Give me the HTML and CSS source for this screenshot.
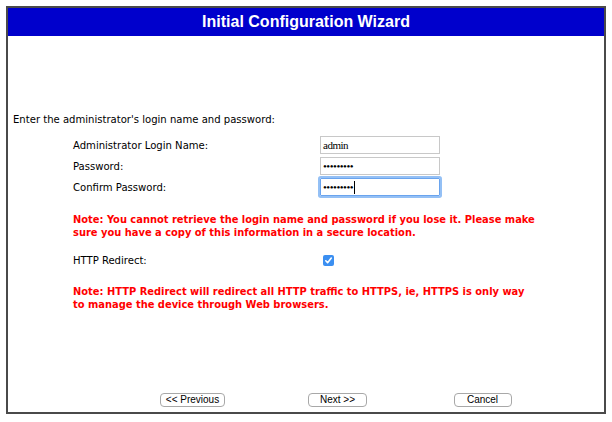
FILE: index.html
```html
<!DOCTYPE html>
<html>
<head>
<meta charset="utf-8">
<link rel="stylesheet" href="styles.css">
</head>
<body>
<div class="frame">
  <div class="header">Initial Configuration Wizard</div>
  <div class="content">
    <p class="intro">Enter the administrator's login name and password:</p>
    <div class="fields">
      <span class="label">Administrator Login Name:</span>
      <span class="field">admin</span>
      <span class="label">Password:</span>
      <span class="field">&#8226;&#8226;&#8226;&#8226;&#8226;&#8226;&#8226;&#8226;&#8226;</span>
      <span class="label">Confirm Password:</span>
      <span class="field focused">&#8226;&#8226;&#8226;&#8226;&#8226;&#8226;&#8226;&#8226;&#8226;<span class="caret"></span></span>
    </div>
    <p class="note note-login">Note: You cannot retrieve the login name and password if you lose it. Please make sure you have a copy of this information in a secure location.</p>
    <div class="fields redirect">
      <span class="label">HTTP Redirect:</span>
      <span class="checkbox"><svg viewBox="0 0 11 11" width="11" height="11"><path d="M2.8 5.8 L4.6 7.7 L8.3 3.1" fill="none" stroke="#fff" stroke-width="1.6" stroke-linecap="round" stroke-linejoin="round"/></svg></span>
    </div>
    <p class="note note-redirect">Note: HTTP Redirect will redirect all HTTP traffic to HTTPS, ie, HTTPS is only way to manage the device through Web browsers.</p>
    <div class="buttons">
      <span class="btn">&lt;&lt; Previous</span>
      <span class="btn">Next &gt;&gt;</span>
      <span class="btn">Cancel</span>
    </div>
  </div>
</div>
</body>
</html>
```
FILE: styles.css
```css
html, body {
  margin: 0;
  padding: 0;
  background: #fff;
}
body {
  font-family: "DejaVu Sans Condensed", "DejaVu Sans", sans-serif;
  font-size: 11px;
  color: #000;
}
.frame {
  margin: 6px 0 0 6px;
  width: 596px;
  height: 404px;
  border: 2px solid #4a4a4a;
  display: flex;
  flex-direction: column;
}
.header {
  height: 28px;
  line-height: 28px;
  background: #0000cc;
  color: #fff;
  text-align: center;
  font-family: "Liberation Sans", Arial, sans-serif;
  font-weight: bold;
  font-size: 16px;
}
.content {
  flex: 1;
  display: flex;
  flex-direction: column;
}
p {
  margin: 0;
}
.intro {
  margin: 77px 0 0 5px;
  line-height: 13px;
  font-size: 11.2px;
}
.fields {
  display: grid;
  grid-template-columns: 247px 120px;
  grid-auto-rows: 18px;
  row-gap: 3px;
  margin: 10px 0 0 65px;
  align-items: center;
}
.label {
  font-size: 11.2px;
}
.field {
  box-sizing: border-box;
  height: 18px;
  border: 1px solid #c8c8c8;
  font-family: "Liberation Serif", "Times New Roman", serif;
  font-size: 11px;
  line-height: 16px;
  padding: 0 2px;
  display: flex;
  align-items: center;
  letter-spacing: -0.5px;
}
.field.focused {
  border-color: #6aa4ee;
  box-shadow: 0 0 0 2px #94c0f5;
  border-radius: 1px;
}
.caret {
  display: inline-block;
  width: 1px;
  height: 13px;
  background: #000;
  margin-left: 1px;
}
.note {
  margin: 17px 0 0 65px;
  width: 465px;
  color: #ff0000;
  font-weight: bold;
  line-height: 13px;
}
.redirect {
  margin-top: 15px;
  grid-auto-rows: 13px;
}
.checkbox {
  width: 11px;
  height: 11px;
  margin-left: 3px;
  background: #3b8ff1;
  border-radius: 2px;
  display: flex;
}
.note-redirect {
  margin-top: 18px;
}
.buttons {
  margin: auto 0 5px 112px;
  display: grid;
  grid-template-columns: repeat(3, 145px);
  justify-items: center;
}
.btn {
  box-sizing: border-box;
  height: 14px;
  line-height: 12px;
  padding: 0;
  white-space: nowrap;
  border: 1px solid #a8a8a8;
  border-radius: 4px;
  background: #fff;
  font-family: "Liberation Sans", Arial, sans-serif;
  font-size: 10px;
  text-align: center;
}
.btn:nth-child(1) { width: 65px; }
.btn:nth-child(2) { width: 59px; }
.btn:nth-child(3) { width: 58px; }
```
